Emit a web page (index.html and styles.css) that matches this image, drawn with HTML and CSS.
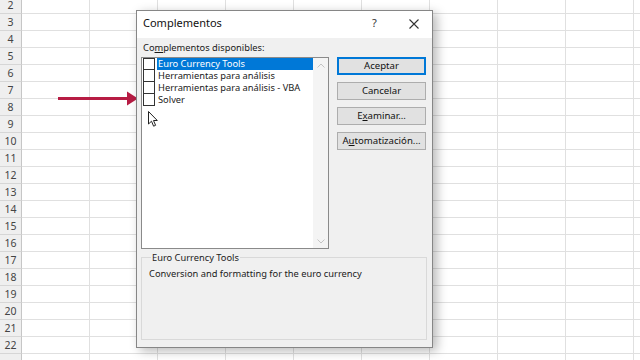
FILE: index.html
```html
<!DOCTYPE html>
<html lang="es">
<head>
<meta charset="utf-8">
<title>Complementos</title>
<link rel="stylesheet" href="styles.css">
</head>
<body>
<div class="sheet">
  <div class="rowheads">
    <div class="rh">2</div><div class="rh">3</div><div class="rh">4</div><div class="rh">5</div>
    <div class="rh">6</div><div class="rh">7</div><div class="rh">8</div><div class="rh">9</div>
    <div class="rh">10</div><div class="rh">11</div><div class="rh">12</div><div class="rh">13</div>
    <div class="rh">14</div><div class="rh">15</div><div class="rh">16</div><div class="rh">17</div>
    <div class="rh">18</div><div class="rh">19</div><div class="rh">20</div><div class="rh">21</div>
    <div class="rh">22</div><div class="rh"></div>
  </div>
  <div class="cells"></div>
</div>

<svg class="red-arrow" width="84" height="17" viewBox="0 0 84 17">
  <line x1="2" y1="8.5" x2="74" y2="8.5" stroke="#b71c44" stroke-width="3"/>
  <polygon points="71,1.5 82,8.5 71,15.5" fill="#b71c44"/>
</svg>

<div class="dialog">
  <div class="titlebar">
    <span class="title">Complementos</span>
    <span class="help">?</span>
    <svg class="close" width="10" height="10" viewBox="0 0 10 10">
      <path d="M0.5 0.5 L9.5 9.5 M9.5 0.5 L0.5 9.5" stroke="#333" stroke-width="1.1"/>
    </svg>
  </div>
  <div class="body">
    <div class="main">
      <div class="label">Co<u>m</u>plementos disponibles:</div>
      <div class="listbox">
        <div class="items">
          <div class="item"><span class="chk"></span><span class="txt sel">Euro Currency Tools</span></div>
          <div class="item"><span class="chk"></span><span class="txt">Herramientas para análisis</span></div>
          <div class="item"><span class="chk"></span><span class="txt">Herramientas para análisis - VBA</span></div>
          <div class="item"><span class="chk"></span><span class="txt">Solver</span></div>
        </div>
        <div class="scrollbar">
          <svg width="8" height="5" viewBox="0 0 8 5"><path d="M0.5 4.5 L4 1 L7.5 4.5" fill="none" stroke="#c4c4c4" stroke-width="1"/></svg>
          <svg width="8" height="5" viewBox="0 0 8 5"><path d="M0.5 0.5 L4 4 L7.5 0.5" fill="none" stroke="#c4c4c4" stroke-width="1"/></svg>
        </div>
      </div>
      <div class="buttons">
        <div class="btn default">Aceptar</div>
        <div class="btn">Cancelar</div>
        <div class="btn">E<u>x</u>aminar...</div>
        <div class="btn">A<u>u</u>tomatización...</div>
      </div>
    </div>
    <fieldset class="group">
      <legend>Euro Currency Tools</legend>
      <p class="desc">Conversion and formatting for the euro currency</p>
    </fieldset>
  </div>
</div>

<svg class="cursor" width="11" height="17" viewBox="0 0 11 17">
  <path d="M0.5 0.5 L0.5 13 L3.5 10.2 L5.6 15.2 L7.6 14.3 L5.5 9.5 L9.3 9.5 Z" fill="#fff" stroke="#222" stroke-width="1" stroke-linejoin="round"/>
</svg>
</body>
</html>
```

FILE: styles.css
```css
* { box-sizing: border-box; }
html, body { margin: 0; padding: 0; }
body {
  width: 640px;
  height: 360px;
  overflow: hidden;
  background: #fff;
  font-family: "Noto Sans", "DejaVu Sans", sans-serif;
  font-size: 9.3px;
  color: #1a1a1a;
  position: relative;
}

.sheet {
  display: flex;
  height: 360px;
}
.rowheads {
  width: 22px;
  margin-top: -3px;
  background: #efefef;
  flex: none;
}
.rh {
  height: 17px;
  border-bottom: 1px solid #d6d6d6;
  border-right: 1px solid #c6c6c6;
  text-align: center;
  line-height: 16px;
  font-size: 10.5px;
  color: #444;
}
.cells {
  flex: 1;
  background-image:
    repeating-linear-gradient(to bottom, transparent 0 16px, #e0e0e0 16px 17px),
    repeating-linear-gradient(to right, transparent 0 67px, #e0e0e0 67px 68px);
  background-position: 0 -3px, 0 0;
}

.red-arrow {
  position: absolute;
  left: 56px;
  top: 90px;
}

.dialog {
  position: absolute;
  left: 136px;
  top: 10px;
  width: 297px;
  height: 338px;
  background: #f0f0f0;
  border: 1px solid #868686;
  box-shadow: 4px 3px 10px rgba(0, 0, 0, 0.28);
}
.titlebar {
  height: 27px;
  background: #fff;
  display: flex;
  align-items: flex-start;
  padding: 5px 0 0 6px;
}
.title {
  font-size: 11px;
  line-height: 14px;
  color: #111;
  flex: 1;
}
.help {
  font-size: 11px;
  line-height: 14px;
  color: #333;
  width: 10px;
  margin-right: 27px;
}
.close {
  margin: 3px 13px 0 0;
}

.body {
  padding: 0 0 0 4px;
}
.main {
  display: grid;
  grid-template-columns: 188px 89px;
  column-gap: 8px;
}
.label {
  grid-column: 1;
  grid-row: 1;
  padding: 3px 0 2px 2px;
  line-height: 14px;
}
.listbox {
  grid-column: 1;
  grid-row: 2;
  height: 192px;
  background: #fff;
  border: 1px solid #8a8a8a;
  display: flex;
}
.items {
  flex: 1;
  padding: 0 0 0 1px;
}
.item {
  display: flex;
  align-items: center;
  height: 12px;
}
.chk {
  width: 12px;
  height: 12px;
  border: 1px solid #333;
  background: #fff;
  flex: none;
}
.item + .item .chk { border-top: none; }
.txt {
  margin-left: 2px;
  padding: 0 1px;
  line-height: 12px;
  white-space: nowrap;
}
.txt.sel {
  background: #0078d7;
  color: #fff;
  flex: 1;
}
.scrollbar {
  width: 15px;
  background: #f4f4f4;
  display: flex;
  flex-direction: column;
  justify-content: space-between;
  align-items: center;
  padding: 5px 0 4px;
}
.buttons {
  grid-column: 2;
  grid-row: 2;
  display: flex;
  flex-direction: column;
  gap: 7px;
}
.btn {
  height: 18px;
  background: #e1e1e1;
  border: 1px solid #adadad;
  text-align: center;
  line-height: 16px;
  color: #111;
  font-size: 9.6px;
}
.btn.default {
  border: 2px solid #0078d7;
  line-height: 14px;
}

.group {
  margin: 2px 0 0 0;
  width: 286px;
  height: 89px;
  border: 1px solid #d9d9d9;
  padding: 0 7px;
}
.group legend {
  padding: 0 1px;
  margin-left: 2px;
  line-height: 13px;
  color: #222;
}
.desc {
  margin: 3px 0 0 0;
  line-height: 14px;
}

.cursor {
  position: absolute;
  left: 148px;
  top: 111px;
}
```
